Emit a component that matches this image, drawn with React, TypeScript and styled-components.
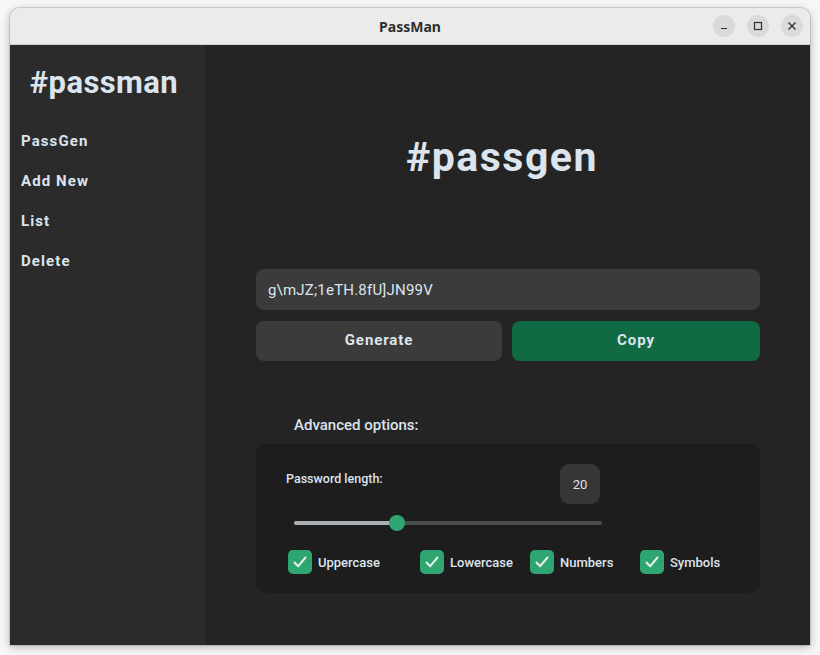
import React from "react";
import styled, { createGlobalStyle } from "styled-components";

const Global = createGlobalStyle`
  html, body { margin: 0; padding: 0; background: #f4f4f4; }
  body { font-family: Roboto, "Noto Sans", sans-serif; }
`;

const Desktop = styled.div`
  width: 820px;
  height: 655px;
  padding: 8px 0 0 10px;
  box-sizing: border-box;
  background: #f7f7f7;
`;

const Window = styled.div`
  width: 800px;
  height: 637px;
  display: flex;
  flex-direction: column;
  border-radius: 10px 10px 0 0;
  overflow: hidden;
  box-shadow: 0 2px 10px rgba(0, 0, 0, 0.28), 0 0 0 1px rgba(0, 0, 0, 0.12);
`;

const TitleBar = styled.div`
  height: 36px;
  flex: none;
  background: #ebebeb;
  border-bottom: 1px solid #cfcfcf;
  display: flex;
  align-items: center;
  justify-content: center;
  position: relative;
`;

const TitleText = styled.div`
  font-family: "Noto Sans", "DejaVu Sans", sans-serif;
  font-weight: 700;
  font-size: 14px;
  color: #2e2e2e;
`;

const Controls = styled.div`
  position: absolute;
  right: 7px;
  top: 7px;
  display: flex;
  gap: 12px;
`;

const CtrlBtn = styled.div`
  width: 22px;
  height: 22px;
  border-radius: 50%;
  background: #dadada;
  display: flex;
  align-items: center;
  justify-content: center;
  color: #2e2e2e;
`;

const Body = styled.div`
  flex: 1;
  display: flex;
`;

const Sidebar = styled.div`
  width: 196px;
  background: #2b2b2b;
  display: flex;
  flex-direction: column;
  padding-top: 20px;
  box-sizing: border-box;
`;

const Logo = styled.div`
  font-size: 31px;
  font-weight: 700;
  color: #dce4ee;
  text-align: center;
  line-height: 36px;
  margin-bottom: 20px;
  padding-right: 8px;
  letter-spacing: 0.4px;
`;

const NavItem = styled.div`
  font-size: 15px;
  font-weight: 700;
  color: #dce4ee;
  padding-left: 11px;
  height: 40px;
  display: flex;
  align-items: center;
  letter-spacing: 1.1px;
`;

const Main = styled.div`
  flex: 1;
  background: #242424;
  display: flex;
  flex-direction: column;
  padding: 0 50px;
  box-sizing: border-box;
`;

const Heading = styled.div`
  font-size: 41px;
  font-weight: 700;
  color: #dce4ee;
  text-align: center;
  line-height: 48px;
  margin-top: 88px;
  padding-right: 12px;
  letter-spacing: 1.5px;
`;

const Entry = styled.div`
  margin-top: 88px;
  height: 41px;
  border-radius: 8px;
  background: #3b3b3b;
  display: flex;
  align-items: center;
  padding-left: 12px;
  font-size: 15px;
  color: #dce4ee;
  letter-spacing: 0.2px;
`;

const ButtonRow = styled.div`
  display: flex;
  gap: 10px;
  margin-top: 11px;
`;

const Button = styled.div<{ $primary?: boolean }>`
  height: 40px;
  flex: ${(p) => (p.$primary ? "0 0 248px" : "1")};
  border-radius: 8px;
  background: ${(p) => (p.$primary ? "#106a43" : "#3b3b3b")};
  color: #dce4ee;
  font-weight: 700;
  font-size: 15px;
  display: flex;
  align-items: center;
  justify-content: center;
  letter-spacing: 0.9px;
  padding-bottom: 3px;
  box-sizing: border-box;
`;

const SectionLabel = styled.div`
  margin-top: 55px;
  padding-left: 38px;
  font-size: 15px;
  font-weight: 500;
  color: #dce4ee;
  line-height: 18px;
`;

const OptionsFrame = styled.div`
  margin-top: 10px;
  height: 149px;
  border-radius: 10px;
  background: #1d1d1d;
  display: flex;
  flex-direction: column;
  padding: 20px 0 0 30px;
  box-sizing: border-box;
`;

const LengthRow = styled.div`
  display: flex;
  align-items: flex-start;
  width: 314px;
  justify-content: space-between;
`;

const SmallLabel = styled.div`
  font-size: 12.5px;
  font-weight: 500;
  color: #dce4ee;
  margin-top: 7px;
`;

const NumberBox = styled.div`
  width: 40px;
  height: 40px;
  border-radius: 9px;
  background: #363636;
  display: flex;
  align-items: center;
  justify-content: center;
  font-size: 13px;
  color: #dce4ee;
`;

const SliderTrack = styled.div`
  margin: 17px 0 0 8px;
  width: 308px;
  height: 4px;
  border-radius: 2px;
  background: #4a4d50;
  position: relative;
`;

const SliderFill = styled.div`
  height: 100%;
  border-radius: 2px;
  background: #aab0b5;
`;

const Thumb = styled.div`
  position: absolute;
  top: -6px;
  width: 16px;
  height: 16px;
  margin-left: -8px;
  border-radius: 50%;
  background: #2fa572;
`;

const CheckRow = styled.div`
  display: flex;
  margin-top: 25px;
  margin-left: 2px;
`;

const CheckItem = styled.div<{ $w: number }>`
  width: ${(p) => p.$w}px;
  display: flex;
  align-items: center;
  gap: 6px;
  font-size: 13px;
  font-weight: 500;
  color: #dce4ee;
`;

const Box = styled.div`
  width: 24px;
  height: 24px;
  border-radius: 5px;
  background: #2fa572;
  display: flex;
  align-items: center;
  justify-content: center;
`;

const Check = () => (
  <svg width="16" height="16" viewBox="0 0 16 16">
    <path d="M2.5 8.5 L6.2 12.2 L13.5 3.5" fill="none" stroke="#e8f0ec" strokeWidth="2" strokeLinecap="round" strokeLinejoin="round" />
  </svg>
);

const options = [
  { label: "Uppercase", w: 132 },
  { label: "Lowercase", w: 110 },
  { label: "Numbers", w: 110 },
  { label: "Symbols", w: 100 },
];

export default function App() {
  const pct = (103 / 308) * 100;
  return (
    <>
      <Global />
      <Desktop>
        <Window>
          <TitleBar>
            <TitleText>PassMan</TitleText>
            <Controls>
              <CtrlBtn>
                <svg width="10" height="10" viewBox="0 0 10 10">
                  <path d="M2 7.5 H8" stroke="#2e2e2e" strokeWidth="1.2" />
                </svg>
              </CtrlBtn>
              <CtrlBtn>
                <svg width="10" height="10" viewBox="0 0 10 10">
                  <rect x="1.5" y="1.5" width="7" height="7" fill="none" stroke="#2e2e2e" strokeWidth="1.2" />
                </svg>
              </CtrlBtn>
              <CtrlBtn>
                <svg width="10" height="10" viewBox="0 0 10 10">
                  <path d="M1.5 1.5 L8.5 8.5 M8.5 1.5 L1.5 8.5" stroke="#2e2e2e" strokeWidth="1.3" />
                </svg>
              </CtrlBtn>
            </Controls>
          </TitleBar>
          <Body>
            <Sidebar>
              <Logo>#passman</Logo>
              <NavItem>PassGen</NavItem>
              <NavItem>Add New</NavItem>
              <NavItem>List</NavItem>
              <NavItem>Delete</NavItem>
            </Sidebar>
            <Main>
              <Heading>#passgen</Heading>
              <Entry>g\mJZ;1eTH.8fU]JN99V</Entry>
              <ButtonRow>
                <Button>Generate</Button>
                <Button $primary>Copy</Button>
              </ButtonRow>
              <SectionLabel>Advanced options:</SectionLabel>
              <OptionsFrame>
                <LengthRow>
                  <SmallLabel>Password length:</SmallLabel>
                  <NumberBox>20</NumberBox>
                </LengthRow>
                <SliderTrack>
                  <SliderFill style={{ width: `${pct}%` }} />
                  <Thumb style={{ left: `${pct}%` }} />
                </SliderTrack>
                <CheckRow>
                  {options.map((o) => (
                    <CheckItem key={o.label} $w={o.w}>
                      <Box>
                        <Check />
                      </Box>
                      {o.label}
                    </CheckItem>
                  ))}
                </CheckRow>
              </OptionsFrame>
            </Main>
          </Body>
        </Window>
      </Desktop>
    </>
  );
}
